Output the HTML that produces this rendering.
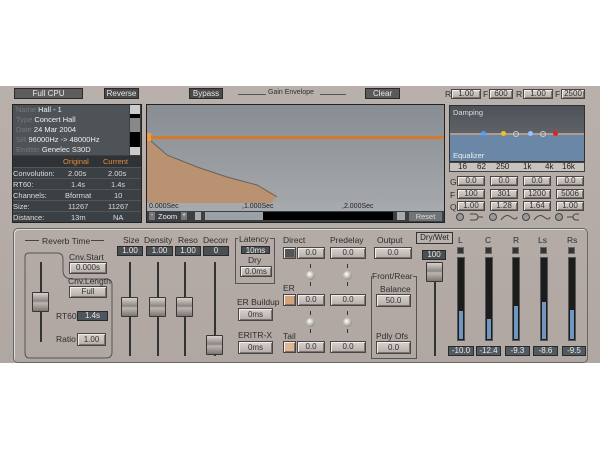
<!DOCTYPE html>
<html><head><style>
*{margin:0;padding:0;box-sizing:border-box}
body{width:600px;height:450px;background:#fff;position:relative;overflow:hidden;font-family:"Liberation Sans",sans-serif;font-size:8px;color:#222}
.a{position:absolute}
#plug{left:0;top:86px;width:600px;height:277px;background:linear-gradient(#b9b0ab,#b0a7a2);}
.btn{position:absolute;background:linear-gradient(#d8d2ce,#b5ada8);border:1px solid #4a4542;box-shadow:inset 1px 1px 0 #eee,inset -1px -1px 0 #7a736f;text-align:center;font-size:8px;color:#333;line-height:10px}
.dk{position:absolute;background:#4a4f53;border:1px solid #2a2a2a;color:#e8e8e8;text-align:center;font-size:8px}
.lbl{position:absolute;font-size:8.5px;color:#2e2e2e;white-space:nowrap}
.track{position:absolute;width:2px;background:#333}
.hand{position:absolute;width:17px;height:20px;background:linear-gradient(#d7d1cd,#8d8682 45%,#bcb5b1 55%,#7c7672);border:1px solid #3a3633;border-radius:1px}
.knob{position:absolute;width:9px;height:9px;border-radius:50%;background:radial-gradient(circle at 40% 35%,#fff,#a9a39f 60%,#666);}
.met{position:absolute;width:8px;height:84px;background:#1c1c1c;border:1px solid #555}
.met i{position:absolute;left:1px;right:1px;bottom:1px;background:#6f97c2}
.sq{position:absolute;width:7px;height:7px;background:#333;border:1px solid #666}
</style></head><body>
<div id="plug" class="a"></div>
<!-- top row -->
<div class="dk" style="left:14px;top:88px;width:69px;height:11px;background:#5d5d5d;line-height:9px">Full CPU</div>
<div class="dk" style="left:104px;top:88px;width:35px;height:11px;line-height:9px;background:#4a4a4a">Reverse</div>
<div class="dk" style="left:189px;top:88px;width:34px;height:11px;line-height:9px;background:#4a4a4a">Bypass</div>
<div class="a" style="left:238px;top:94px;width:28px;height:1px;background:#555"></div>
<div class="lbl" style="left:268px;top:89px;font-size:7px">Gain Envelope</div>
<div class="a" style="left:320px;top:94px;width:26px;height:1px;background:#555"></div>
<div class="dk" style="left:365px;top:88px;width:35px;height:11px;line-height:9px;background:#5a5a5a">Clear</div>
<div class="lbl" style="left:445px;top:89px">R</div><div class="btn" style="left:451px;top:89px;width:30px;height:10px;line-height:8px">1.00</div>
<div class="lbl" style="left:483px;top:89px">F</div><div class="btn" style="left:489px;top:89px;width:24px;height:10px;line-height:8px">600</div>
<div class="lbl" style="left:516px;top:89px">R</div><div class="btn" style="left:523px;top:89px;width:30px;height:10px;line-height:8px">1.00</div>
<div class="lbl" style="left:555px;top:89px">F</div><div class="btn" style="left:561px;top:89px;width:24px;height:10px;line-height:8px">2500</div>
<!-- info panel -->
<div class="a" style="left:12px;top:104px;width:130px;height:119px;background:#3b4044;border:1px solid #222"></div>
<div class="a" style="left:13px;top:105px;width:116px;height:50px;background:#4d5357;color:#eee;font-size:7.5px;line-height:10px;padding-left:3px">
<span style="color:#777">Name</span> Hall - 1<br><span style="color:#777">Type</span> Concert Hall<br><span style="color:#777">Date</span> 24 Mar 2004<br><span style="color:#777">SR</span> 96000Hz -&gt; 48000Hz<br><span style="color:#777">Emitter</span> Genelec S30D</div>
<div class="a" style="left:130px;top:105px;width:10px;height:50px;background:#000"><div style="height:9px;background:#ccc"></div><div style="height:14px;background:#888;margin-top:4px"></div><div style="position:absolute;bottom:0;width:10px;height:8px;background:#ccc"></div></div>
<div class="a" style="left:13px;top:156px;width:128px;color:#ddd;font-size:7.5px;line-height:11px">
<div style="height:11px;background:#2f3336"><span class="a" style="left:50px;color:#e08a3c">Original</span><span class="a" style="left:90px;color:#e08a3c">Current</span></div>
<div style="height:11px;border-top:1px solid #555;position:relative">Convolution:<span class="a" style="left:55px">2.00s</span><span class="a" style="left:95px">2.00s</span></div>
<div style="height:11px;border-top:1px solid #555;position:relative">RT60:<span class="a" style="left:58px">1.4s</span><span class="a" style="left:98px">1.4s</span></div>
<div style="height:11px;border-top:1px solid #555;position:relative">Channels:<span class="a" style="left:52px">Bformat</span><span class="a" style="left:101px">10</span></div>
<div style="height:11px;border-top:1px solid #555;position:relative">Size:<span class="a" style="left:55px">11267</span><span class="a" style="left:95px">11267</span></div>
<div style="height:11px;border-top:1px solid #555;position:relative">Distance:<span class="a" style="left:58px">13m</span><span class="a" style="left:100px">NA</span></div>
</div>
<!-- graph -->
<div class="a" style="left:146px;top:104px;width:299px;height:119px;background:#3b4044;border:1px solid #222"></div>
<svg class="a" style="left:147px;top:105px" width="297" height="98">
<defs><linearGradient id="g" x1="0" y1="0" x2="0" y2="1"><stop offset="0" stop-color="#878d93"/><stop offset="1" stop-color="#a4a7aa"/></linearGradient></defs>
<rect width="297" height="98" fill="url(#g)"/>
<path d="M0 32 L4 36 L20 50 L50 62 L80 72 L110 80 L130 90 L125 98 L0 98Z" fill="#b99272"/>
<path d="M0 32 L4 36 L20 50 L50 62 L80 72 L110 80 L130 92" stroke="#6d5f56" fill="none"/>
<rect x="0" y="31" width="297" height="3" fill="#d47a2c"/>
<rect x="0" y="28" width="4" height="8" fill="#f19a3f"/>
</svg>
<div class="a" style="left:147px;top:203px;width:297px;height:8px;background:#a7aaad;font-size:7px;color:#222;line-height:8px"><span class="a" style="left:2px">0.000Sec</span><span class="a" style="left:95px">,1.000Sec</span><span class="a" style="left:195px">,2.000Sec</span></div>
<div class="a" style="left:147px;top:211px;width:297px;height:11px;background:#3b4044"></div>
<div class="a" style="left:149px;top:212px;width:6px;height:8px;background:#777;color:#eee;font-size:7px;line-height:8px;text-align:center">-</div>
<div class="lbl" style="left:158px;top:212px;color:#eee;font-size:7.5px">Zoom</div>
<div class="a" style="left:181px;top:212px;width:6px;height:8px;background:#777;color:#eee;font-size:7px;line-height:8px;text-align:center">+</div>
<div class="a" style="left:195px;top:212px;width:6px;height:8px;background:#aaa"></div>
<div class="a" style="left:205px;top:212px;width:58px;height:8px;background:#9aa2a8"></div>
<div class="a" style="left:263px;top:212px;width:130px;height:8px;background:#000"></div>
<div class="a" style="left:397px;top:212px;width:8px;height:8px;background:#aaa"></div>
<div class="a" style="left:409px;top:212px;width:33px;height:9px;background:#6f7478;color:#ddd;font-size:7.5px;text-align:center;line-height:9px">Reset</div>
<!-- damping / eq -->
<div class="a" style="left:449px;top:105px;width:136px;height:57px;background:#2e3236"></div>
<div class="a" style="left:450px;top:106px;width:134px;height:28px;background:linear-gradient(#4c5257,#5d6368)"></div>
<div class="a" style="left:450px;top:135px;width:134px;height:26px;background:#6b87a7"></div>
<div class="a" style="left:450px;top:133px;width:134px;height:2px;background:#b49c8a"></div>
<div class="lbl" style="left:453px;top:108px;color:#ddd;font-size:7.5px">Damping</div>
<div class="lbl" style="left:453px;top:151px;color:#eee;font-size:7.5px">Equalizer</div>
<div class="a" style="left:481px;top:131px;width:5px;height:5px;border-radius:50%;background:#4aa0ff"></div>
<div class="a" style="left:501px;top:131px;width:5px;height:5px;border-radius:50%;background:#f2c21a"></div>
<div class="a" style="left:513px;top:131px;width:6px;height:6px;border-radius:50%;border:1px solid #ccc"></div>
<div class="a" style="left:528px;top:131px;width:5px;height:5px;border-radius:50%;background:#9cc0ff"></div>
<div class="a" style="left:540px;top:131px;width:6px;height:6px;border-radius:50%;border:1px solid #ccc"></div>
<div class="a" style="left:553px;top:131px;width:5px;height:5px;border-radius:50%;background:#e8201a"></div>
<div class="a" style="left:449px;top:162px;width:136px;height:10px;background:#c9c3bf;border:1px solid #444;font-size:8px;line-height:8px"><span class="a" style="left:8px">16</span><span class="a" style="left:27px">62</span><span class="a" style="left:46px">250</span><span class="a" style="left:73px">1k</span><span class="a" style="left:95px">4k</span><span class="a" style="left:112px">16k</span></div>
<div class="lbl" style="left:450px;top:177px">G</div><div class="lbl" style="left:450px;top:190px">F</div><div class="lbl" style="left:450px;top:202px">Q</div>
<div class="btn" style="left:457px;top:176px;width:28px;height:10px;line-height:8px">0.0</div><div class="btn" style="left:490px;top:176px;width:28px;height:10px;line-height:8px">0.0</div><div class="btn" style="left:523px;top:176px;width:28px;height:10px;line-height:8px">0.0</div><div class="btn" style="left:556px;top:176px;width:28px;height:10px;line-height:8px">0.0</div>
<div class="btn" style="left:457px;top:189px;width:28px;height:10px;line-height:8px">100</div><div class="btn" style="left:490px;top:189px;width:28px;height:10px;line-height:8px">301</div><div class="btn" style="left:523px;top:189px;width:28px;height:10px;line-height:8px">1200</div><div class="btn" style="left:556px;top:189px;width:28px;height:10px;line-height:8px">5006</div>
<div class="btn" style="left:457px;top:201px;width:28px;height:10px;line-height:8px">1.00</div><div class="btn" style="left:490px;top:201px;width:28px;height:10px;line-height:8px">1.28</div><div class="btn" style="left:523px;top:201px;width:28px;height:10px;line-height:8px">1.64</div><div class="btn" style="left:556px;top:201px;width:28px;height:10px;line-height:8px">1.00</div>
<svg class="a" style="left:455px;top:211px" width="132" height="12" fill="none" stroke="#444" stroke-width="1">
<circle cx="5" cy="6" r="3.5" fill="#999"/><path d="M15 3h5a3 3 0 0 1 0 6h-5M23 6h5"/>
<circle cx="38" cy="6" r="3.5" fill="#999"/><path d="M46 9 q5 -7 10 -3 t6 0"/>
<circle cx="71" cy="6" r="3.5" fill="#999"/><path d="M79 9 q5 -7 10 -3 t6 0"/>
<circle cx="104" cy="6" r="3.5" fill="#999"/><path d="M112 6h6M124 3h-3a3 3 0 0 0 0 6h3"/>
</svg>
<!-- lower panel -->
<div class="a" style="left:13px;top:228px;width:575px;height:135px;border:1px solid #666;border-radius:5px;box-shadow:inset 1px 1px 0 #ddd"></div>
<div class="a" style="left:25px;top:240px;width:14px;height:1px;background:#444"></div>
<div class="lbl" style="left:42px;top:236px">Reverb Time</div>
<div class="a" style="left:91px;top:240px;width:13px;height:1px;background:#444"></div>
<svg class="a" style="left:24px;top:252px" width="90" height="108" fill="none" stroke="#555"><path d="M5 1H33Q39 1 39 7V18Q39 27 48 27H82Q88 27 88 33V100Q88 106 82 106H5Q1 106 1 100V5Q1 1 5 1Z"/></svg>
<div class="track" style="left:40px;top:262px;height:80px"></div><div class="hand" style="left:32px;top:292px"></div>
<div class="lbl" style="left:69px;top:252px">Cnv.Start</div>
<div class="btn" style="left:69px;top:262px;width:38px;height:12px">0.000s</div>
<div class="lbl" style="left:68px;top:276px">Cnv.Length</div>
<div class="btn" style="left:69px;top:286px;width:38px;height:12px">Full</div>
<div class="lbl" style="left:56px;top:311px">RT60</div>
<div class="dk" style="left:77px;top:311px;width:31px;height:10px;line-height:8px;background:#4d565c">1.4s</div>
<div class="lbl" style="left:56px;top:334px">Ratio</div>
<div class="btn" style="left:77px;top:333px;width:29px;height:13px;line-height:11px">1.00</div>
<div class="lbl" style="left:123px;top:235px">Size</div><div class="lbl" style="left:144px;top:235px">Density</div><div class="lbl" style="left:178px;top:235px">Reso</div><div class="lbl" style="left:203px;top:235px">Decorr</div>
<div class="dk" style="left:117px;top:246px;width:26px;height:10px;line-height:8px">1.00</div><div class="dk" style="left:146px;top:246px;width:27px;height:10px;line-height:8px">1.00</div><div class="dk" style="left:175px;top:246px;width:26px;height:10px;line-height:8px">1.00</div><div class="dk" style="left:203px;top:246px;width:26px;height:10px;line-height:8px">0</div>
<div class="track" style="left:129px;top:262px;height:94px"></div><div class="hand" style="left:121px;top:297px"></div>
<div class="track" style="left:157px;top:262px;height:94px"></div><div class="hand" style="left:149px;top:297px"></div>
<div class="track" style="left:184px;top:262px;height:94px"></div><div class="hand" style="left:176px;top:297px"></div>
<div class="track" style="left:214px;top:262px;height:94px"></div><div class="hand" style="left:206px;top:335px"></div>
<div class="a" style="left:235px;top:238px;width:40px;height:46px;border:1px solid #555"></div>
<div class="lbl" style="left:238px;top:234px;background:#b4aba6;padding:0 1px">Latency</div>
<div class="dk" style="left:241px;top:246px;width:29px;height:8px;line-height:7px">10ms</div>
<div class="lbl" style="left:248px;top:255px">Dry</div>
<div class="btn" style="left:240px;top:266px;width:32px;height:11px;line-height:9px">0.0ms</div>
<div class="lbl" style="left:237px;top:297px">ER Buildup</div>
<div class="btn" style="left:238px;top:308px;width:35px;height:13px;line-height:11px">0ms</div>
<div class="lbl" style="left:238px;top:330px">ERITR-X</div>
<div class="btn" style="left:238px;top:341px;width:35px;height:13px;line-height:11px">0ms</div>
<div class="lbl" style="left:283px;top:235px">Direct</div>
<div class="lbl" style="left:330px;top:235px">Predelay</div>
<div class="lbl" style="left:377px;top:235px">Output</div>
<div class="lbl" style="left:283px;top:283px">ER</div>
<div class="lbl" style="left:283px;top:331px">Tail</div>
<div class="btn" style="left:283px;top:247px;width:13px;height:12px;background:#555"></div>
<div class="btn" style="left:283px;top:294px;width:13px;height:12px;background:#d9a37a"></div>
<div class="btn" style="left:283px;top:341px;width:13px;height:12px;background:#e0b792"></div>
<div class="btn" style="left:297px;top:247px;width:28px;height:12px">0.0</div><div class="btn" style="left:297px;top:294px;width:28px;height:12px">0.0</div><div class="btn" style="left:297px;top:341px;width:28px;height:12px">0.0</div>
<div class="btn" style="left:330px;top:247px;width:36px;height:12px">0.0</div><div class="btn" style="left:330px;top:294px;width:36px;height:12px">0.0</div><div class="btn" style="left:330px;top:341px;width:36px;height:12px">0.0</div>
<div class="btn" style="left:374px;top:247px;width:38px;height:12px">0.0</div>
<div class="track" style="left:310px;top:264px;height:4px;width:1px"></div><div class="knob" style="left:306px;top:271px"></div><div class="track" style="left:310px;top:282px;height:4px;width:1px"></div>
<div class="track" style="left:347px;top:264px;height:4px;width:1px"></div><div class="knob" style="left:343px;top:271px"></div><div class="track" style="left:347px;top:282px;height:4px;width:1px"></div>
<div class="track" style="left:310px;top:311px;height:4px;width:1px"></div><div class="knob" style="left:306px;top:318px"></div><div class="track" style="left:310px;top:329px;height:4px;width:1px"></div>
<div class="track" style="left:347px;top:311px;height:4px;width:1px"></div><div class="knob" style="left:343px;top:318px"></div><div class="track" style="left:347px;top:329px;height:4px;width:1px"></div>
<div class="a" style="left:371px;top:276px;width:46px;height:83px;border:1px solid #555"></div>
<div class="lbl" style="left:372px;top:271px;background:#b4aba6">Front/Rear</div>
<div class="lbl" style="left:380px;top:284px">Balance</div>
<div class="btn" style="left:376px;top:294px;width:35px;height:13px;line-height:11px">50.0</div>
<div class="lbl" style="left:376px;top:331px">Pdly Ofs</div>
<div class="btn" style="left:376px;top:341px;width:35px;height:13px;line-height:11px">0.0</div>
<div class="dk" style="left:416px;top:232px;width:37px;height:12px;background:#b9b2ad;color:#222;line-height:10px;border:1px solid #333">Dry/Wet</div>
<div class="dk" style="left:422px;top:250px;width:24px;height:10px;line-height:8px">100</div>
<div class="track" style="left:434px;top:270px;height:86px"></div><div class="hand" style="left:426px;top:262px"></div>
<div class="lbl" style="left:458px;top:235px">L</div><div class="lbl" style="left:485px;top:235px">C</div><div class="lbl" style="left:513px;top:235px">R</div><div class="lbl" style="left:538px;top:235px">Ls</div><div class="lbl" style="left:567px;top:235px">Rs</div>
<div class="sq" style="left:457px;top:247px"></div><div class="sq" style="left:485px;top:247px"></div><div class="sq" style="left:512px;top:247px"></div><div class="sq" style="left:540px;top:247px"></div><div class="sq" style="left:568px;top:247px"></div>
<div class="met" style="left:457px;top:257px"><i style="height:28px"></i></div>
<div class="met" style="left:485px;top:257px"><i style="height:20px"></i></div>
<div class="met" style="left:512px;top:257px"><i style="height:33px"></i></div>
<div class="met" style="left:540px;top:257px"><i style="height:37px"></i></div>
<div class="met" style="left:568px;top:257px"><i style="height:29px"></i></div>
<div class="dk" style="left:448px;top:346px;width:26px;height:10px;line-height:8px;background:#505a60">-10.0</div>
<div class="dk" style="left:476px;top:346px;width:25px;height:10px;line-height:8px;background:#505a60">-12.4</div>
<div class="dk" style="left:505px;top:346px;width:25px;height:10px;line-height:8px;background:#505a60">-9.3</div>
<div class="dk" style="left:533px;top:346px;width:25px;height:10px;line-height:8px;background:#505a60">-8.6</div>
<div class="dk" style="left:562px;top:346px;width:24px;height:10px;line-height:8px;background:#505a60">-9.5</div>
</body></html>
